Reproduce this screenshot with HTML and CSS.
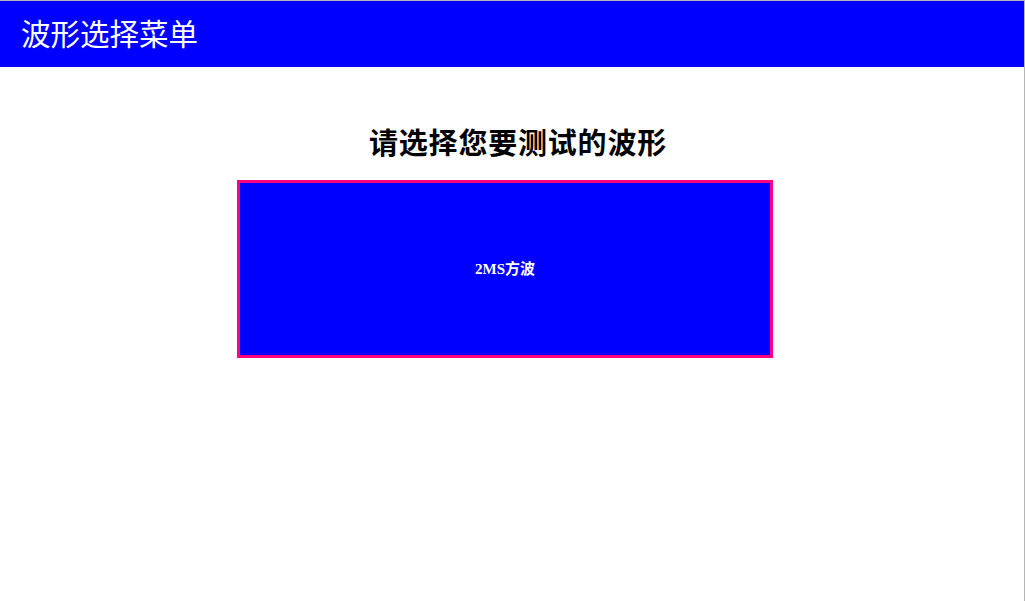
FILE: index.html
```html
<!DOCTYPE html>
<html lang="zh">
<head>
<meta charset="utf-8">
<title>波形选择菜单</title>
<link rel="stylesheet" href="styles.css">
</head>
<body>
<div class="page">
  <header class="topbar">
    <h1 class="topbar-title">波形选择菜单</h1>
  </header>
  <main class="content">
    <h2 class="prompt">请选择您要测试的波形</h2>
    <button class="wave-btn" type="button">2MS方波</button>
  </main>
</div>
</body>
</html>
```

FILE: styles.css
```css
html, body {
  margin: 0;
  padding: 0;
  background: #ffffff;
}

.page {
  width: 1024px;
  height: 600px;
  border-top: 1px solid #b4b4b4;
  border-right: 1px solid #b4b4b4;
  box-sizing: content-box;
  display: flex;
  flex-direction: column;
}

.topbar {
  height: 66px;
  background: #0000ff;
  display: flex;
  align-items: center;
  padding-left: 21px;
}

.topbar-title {
  margin: 0;
  color: #ffffff;
  font-family: "Noto Sans CJK SC", "Noto Sans", sans-serif;
  font-weight: 400;
  font-size: 29.5px;
  line-height: 1;
  margin-top: -2px;
}

.content {
  display: flex;
  flex-direction: column;
  padding-left: 237px;
}

.prompt {
  margin: 57px 0 0 132px;
  font-family: "Noto Sans CJK SC", serif;
  font-weight: 700;
  font-size: 29px;
  line-height: 34px;
  color: #000000;
  letter-spacing: 0.8px;
}

.wave-btn {
  margin-top: 22px;
  width: 536px;
  height: 178px;
  box-sizing: border-box;
  border: 3px solid #ff0080;
  background: #0000ff;
  color: #ffffff;
  font-family: "Liberation Serif", "Noto Sans CJK SC", serif;
  font-weight: 700;
  font-size: 15px;
  padding: 0 0 3px 0;
  cursor: pointer;
}
```
